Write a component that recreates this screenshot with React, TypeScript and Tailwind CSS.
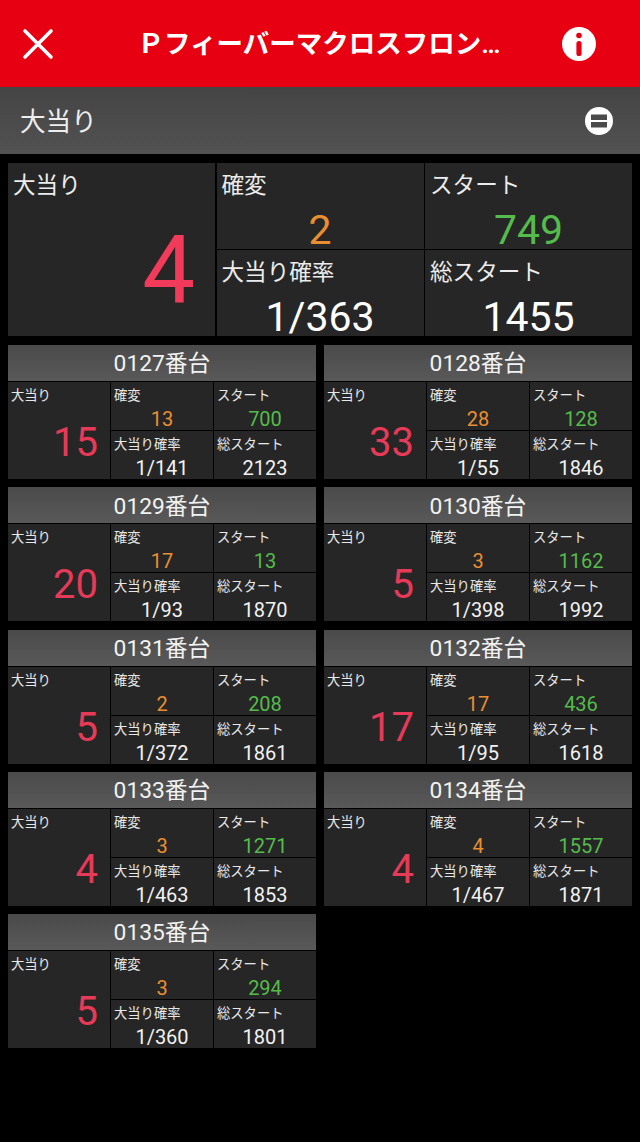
const font = "font-['Roboto','Noto_Sans_CJK_JP',sans-serif]";

type Hall = {
  name: string;
  hits: number;
  kakuhen: number;
  start: number;
  rate: string;
  total: number;
};

const halls: Hall[] = [
  { name: "0127番台", hits: 15, kakuhen: 13, start: 700, rate: "1/141", total: 2123 },
  { name: "0128番台", hits: 33, kakuhen: 28, start: 128, rate: "1/55", total: 1846 },
  { name: "0129番台", hits: 20, kakuhen: 17, start: 13, rate: "1/93", total: 1870 },
  { name: "0130番台", hits: 5, kakuhen: 3, start: 1162, rate: "1/398", total: 1992 },
  { name: "0131番台", hits: 5, kakuhen: 2, start: 208, rate: "1/372", total: 1861 },
  { name: "0132番台", hits: 17, kakuhen: 17, start: 436, rate: "1/95", total: 1618 },
  { name: "0133番台", hits: 4, kakuhen: 3, start: 1271, rate: "1/463", total: 1853 },
  { name: "0134番台", hits: 4, kakuhen: 4, start: 1557, rate: "1/467", total: 1871 },
  { name: "0135番台", hits: 5, kakuhen: 3, start: 294, rate: "1/360", total: 1801 },
];

function SmallCell({ label, value, color }: { label: string; value: string | number; color: string }) {
  return (
    <div className="flex flex-col bg-[#262626] px-[3px] pt-[5px]">
      <div className="text-[13.3px] leading-[18px] text-[#e8e8e8]">{label}</div>
      <div className={`mt-[3px] text-center text-[20px] leading-[22px] ${color}`}>{value}</div>
    </div>
  );
}

function HallCard({ hall }: { hall: Hall }) {
  return (
    <div className="flex h-[134px] flex-col">
      <div className="flex h-[36px] items-center justify-center bg-gradient-to-b from-[#4a4a4a] to-[#595959] pt-[3px] text-[22.8px] text-[#f2f2f2]">
        {hall.name}
      </div>
      <div className="mt-px grid flex-1 grid-cols-3 grid-rows-2 gap-px">
        <div className="row-span-2 flex flex-col bg-[#262626] px-[3px] pt-[5px]">
          <div className="text-[13.3px] leading-[18px] text-[#e8e8e8]">大当り</div>
          <div className="mt-[14px] pr-[9px] text-right text-[40px] leading-[48px] text-[#e63a58]">{hall.hits}</div>
        </div>
        <SmallCell label="確変" value={hall.kakuhen} color="text-[#e98f32]" />
        <SmallCell label="スタート" value={hall.start} color="text-[#55bb4c]" />
        <SmallCell label="大当り確率" value={hall.rate} color="text-[#f2f2f2]" />
        <SmallCell label="総スタート" value={hall.total} color="text-[#f2f2f2]" />
      </div>
    </div>
  );
}

function SummaryCell({ label, value, color }: { label: string; value: string | number; color: string }) {
  return (
    <div className="flex flex-col bg-[#262626] px-[5px] pt-[8px]">
      <div className="text-[22.6px] leading-[30px] text-[#ececec]">{label}</div>
      <div className={`mt-[11px] text-center text-[41px] leading-[36px] ${color}`}>{value}</div>
    </div>
  );
}

export default function App() {
  return (
    <div className={`${font} h-[1142px] w-[640px] overflow-hidden bg-black`}>
      <header className="flex h-[87px] items-center justify-between bg-[#e60012] pl-[22px] pr-[44px]">
        <svg width="32" height="32" viewBox="0 0 32 32" fill="none" stroke="white" strokeWidth="3.6" strokeLinecap="round">
          <path d="M3 3L29 29M29 3L3 29" />
        </svg>
        <div className="ml-[22px] text-[26.5px] font-semibold whitespace-nowrap text-white">Ｐフィーバーマクロスフロン…</div>
        <svg width="34" height="36" viewBox="0 0 34 36">
          <circle cx="17" cy="18" r="17" fill="white" />
          <rect x="14.4" y="15" width="5.2" height="15" rx="2.6" fill="#e60012" />
          <circle cx="17" cy="9.5" r="2.8" fill="#e60012" />
        </svg>
      </header>

      <div className="flex h-[67px] items-center justify-between bg-gradient-to-b from-[#444444] to-[#525252] pl-[20px] pr-[27px]">
        <span className="pt-[3px] text-[25.6px] text-[#eeeeee]">大当り</span>
        <svg width="28" height="28" viewBox="0 0 28 28">
          <circle cx="14" cy="14" r="14" fill="white" />
          <rect x="6" y="7.5" width="16" height="5.5" fill="#4a4a4a" />
          <rect x="6" y="15" width="16" height="5.5" fill="#4a4a4a" />
        </svg>
      </div>

      <main className="px-[8px] pt-[9px]">
        <div className="grid h-[173px] grid-cols-3 grid-rows-2 gap-[1.5px]">
          <div className="row-span-2 flex flex-col bg-[#262626] px-[5px] pt-[8px]">
            <div className="text-[22.6px] leading-[30px] text-[#ececec]">大当り</div>
            <div className="mt-[15px] pr-[15px] text-right text-[94px] leading-[110px] text-[#f23b5a]">4</div>
          </div>
          <SummaryCell label="確変" value={2} color="text-[#e98f32]" />
          <SummaryCell label="スタート" value={749} color="text-[#55bb4c]" />
          <SummaryCell label="大当り確率" value="1/363" color="text-white" />
          <SummaryCell label="総スタート" value={1455} color="text-white" />
        </div>

        <div className="mt-[9px] grid grid-cols-2 gap-x-[8px] gap-y-[8.25px]">
          {halls.map((hall) => (
            <HallCard key={hall.name} hall={hall} />
          ))}
        </div>
      </main>
    </div>
  );
}
